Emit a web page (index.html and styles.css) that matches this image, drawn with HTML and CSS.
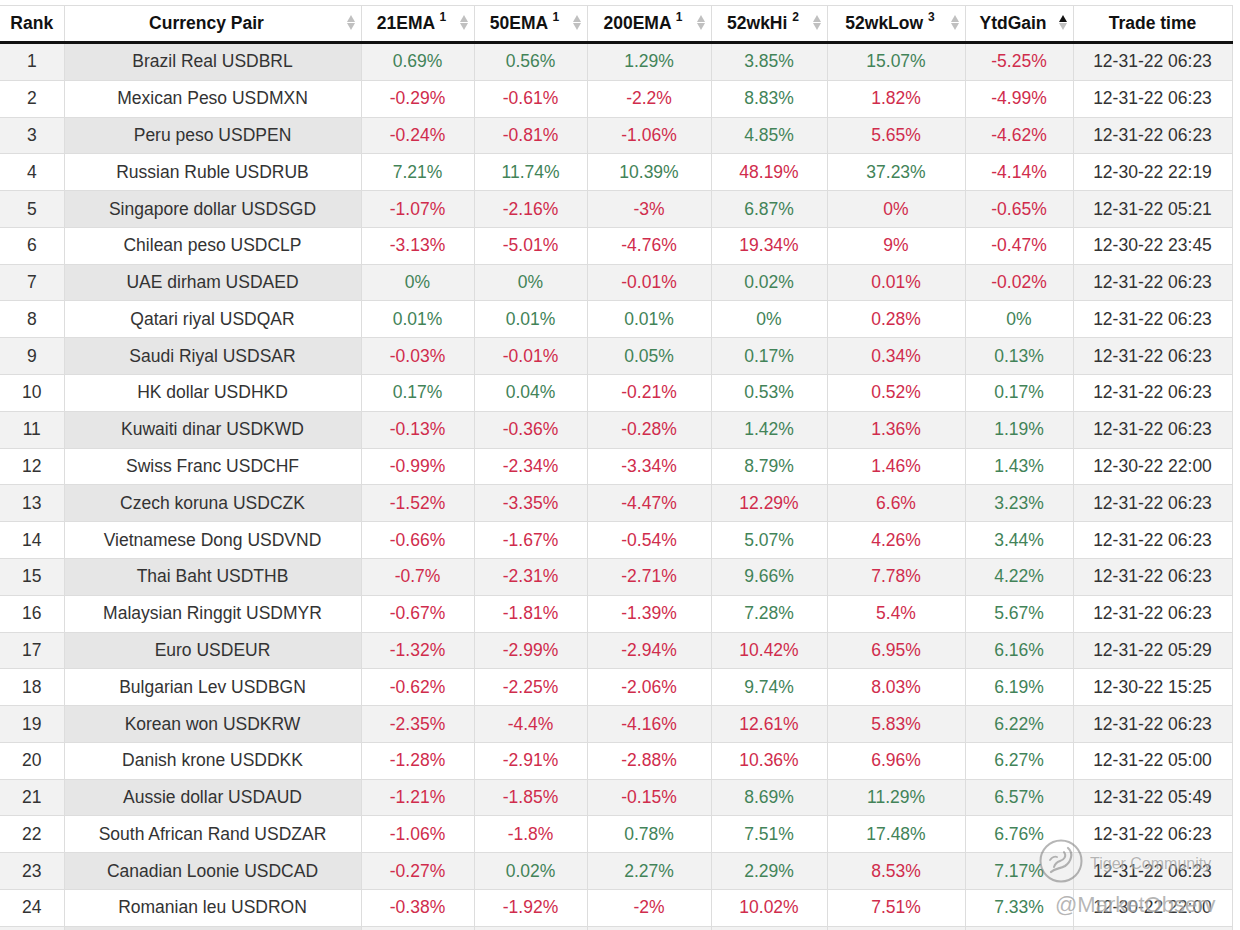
FILE: index.html
```html
<!DOCTYPE html>
<html lang="en">
<head>
<meta charset="utf-8">
<title>Currency Pairs</title>
<link rel="stylesheet" href="styles.css">
</head>
<body>
<div class="wrap">
<table class="grid">
<colgroup>
<col class="c-rank"><col class="c-pair"><col class="c-21"><col class="c-50"><col class="c-200"><col class="c-hi"><col class="c-low"><col class="c-ytd"><col class="c-time">
</colgroup>
<thead>
<tr>
<th>Rank</th>
<th class="sort">Currency Pair</th>
<th class="sort">21EMA <sup>1</sup></th>
<th class="sort">50EMA <sup>1</sup></th>
<th class="sort">200EMA <sup>1</sup></th>
<th class="sort">52wkHi <sup>2</sup></th>
<th class="sort">52wkLow <sup>3</sup></th>
<th class="sort asc">YtdGain</th>
<th>Trade time</th>
</tr>
</thead>
<tbody>
<tr><td>1</td><td class="pair">Brazil Real USDBRL</td><td class="g">0.69%</td><td class="g">0.56%</td><td class="g">1.29%</td><td class="g">3.85%</td><td class="g">15.07%</td><td class="r">-5.25%</td><td>12-31-22 06:23</td></tr>
<tr><td>2</td><td class="pair">Mexican Peso USDMXN</td><td class="r">-0.29%</td><td class="r">-0.61%</td><td class="r">-2.2%</td><td class="g">8.83%</td><td class="r">1.82%</td><td class="r">-4.99%</td><td>12-31-22 06:23</td></tr>
<tr><td>3</td><td class="pair">Peru peso USDPEN</td><td class="r">-0.24%</td><td class="r">-0.81%</td><td class="r">-1.06%</td><td class="g">4.85%</td><td class="r">5.65%</td><td class="r">-4.62%</td><td>12-31-22 06:23</td></tr>
<tr><td>4</td><td class="pair">Russian Ruble USDRUB</td><td class="g">7.21%</td><td class="g">11.74%</td><td class="g">10.39%</td><td class="r">48.19%</td><td class="g">37.23%</td><td class="r">-4.14%</td><td>12-30-22 22:19</td></tr>
<tr><td>5</td><td class="pair">Singapore dollar USDSGD</td><td class="r">-1.07%</td><td class="r">-2.16%</td><td class="r">-3%</td><td class="g">6.87%</td><td class="r">0%</td><td class="r">-0.65%</td><td>12-31-22 05:21</td></tr>
<tr><td>6</td><td class="pair">Chilean peso USDCLP</td><td class="r">-3.13%</td><td class="r">-5.01%</td><td class="r">-4.76%</td><td class="r">19.34%</td><td class="r">9%</td><td class="r">-0.47%</td><td>12-30-22 23:45</td></tr>
<tr><td>7</td><td class="pair">UAE dirham USDAED</td><td class="g">0%</td><td class="g">0%</td><td class="r">-0.01%</td><td class="g">0.02%</td><td class="r">0.01%</td><td class="r">-0.02%</td><td>12-31-22 06:23</td></tr>
<tr><td>8</td><td class="pair">Qatari riyal USDQAR</td><td class="g">0.01%</td><td class="g">0.01%</td><td class="g">0.01%</td><td class="g">0%</td><td class="r">0.28%</td><td class="g">0%</td><td>12-31-22 06:23</td></tr>
<tr><td>9</td><td class="pair">Saudi Riyal USDSAR</td><td class="r">-0.03%</td><td class="r">-0.01%</td><td class="g">0.05%</td><td class="g">0.17%</td><td class="r">0.34%</td><td class="g">0.13%</td><td>12-31-22 06:23</td></tr>
<tr><td>10</td><td class="pair">HK dollar USDHKD</td><td class="g">0.17%</td><td class="g">0.04%</td><td class="r">-0.21%</td><td class="g">0.53%</td><td class="r">0.52%</td><td class="g">0.17%</td><td>12-31-22 06:23</td></tr>
<tr><td>11</td><td class="pair">Kuwaiti dinar USDKWD</td><td class="r">-0.13%</td><td class="r">-0.36%</td><td class="r">-0.28%</td><td class="g">1.42%</td><td class="r">1.36%</td><td class="g">1.19%</td><td>12-31-22 06:23</td></tr>
<tr><td>12</td><td class="pair">Swiss Franc USDCHF</td><td class="r">-0.99%</td><td class="r">-2.34%</td><td class="r">-3.34%</td><td class="g">8.79%</td><td class="r">1.46%</td><td class="g">1.43%</td><td>12-30-22 22:00</td></tr>
<tr><td>13</td><td class="pair">Czech koruna USDCZK</td><td class="r">-1.52%</td><td class="r">-3.35%</td><td class="r">-4.47%</td><td class="r">12.29%</td><td class="r">6.6%</td><td class="g">3.23%</td><td>12-31-22 06:23</td></tr>
<tr><td>14</td><td class="pair">Vietnamese Dong USDVND</td><td class="r">-0.66%</td><td class="r">-1.67%</td><td class="r">-0.54%</td><td class="g">5.07%</td><td class="r">4.26%</td><td class="g">3.44%</td><td>12-31-22 06:23</td></tr>
<tr><td>15</td><td class="pair">Thai Baht USDTHB</td><td class="r">-0.7%</td><td class="r">-2.31%</td><td class="r">-2.71%</td><td class="g">9.66%</td><td class="r">7.78%</td><td class="g">4.22%</td><td>12-31-22 06:23</td></tr>
<tr><td>16</td><td class="pair">Malaysian Ringgit USDMYR</td><td class="r">-0.67%</td><td class="r">-1.81%</td><td class="r">-1.39%</td><td class="g">7.28%</td><td class="r">5.4%</td><td class="g">5.67%</td><td>12-31-22 06:23</td></tr>
<tr><td>17</td><td class="pair">Euro USDEUR</td><td class="r">-1.32%</td><td class="r">-2.99%</td><td class="r">-2.94%</td><td class="r">10.42%</td><td class="r">6.95%</td><td class="g">6.16%</td><td>12-31-22 05:29</td></tr>
<tr><td>18</td><td class="pair">Bulgarian Lev USDBGN</td><td class="r">-0.62%</td><td class="r">-2.25%</td><td class="r">-2.06%</td><td class="g">9.74%</td><td class="r">8.03%</td><td class="g">6.19%</td><td>12-30-22 15:25</td></tr>
<tr><td>19</td><td class="pair">Korean won USDKRW</td><td class="r">-2.35%</td><td class="r">-4.4%</td><td class="r">-4.16%</td><td class="r">12.61%</td><td class="r">5.83%</td><td class="g">6.22%</td><td>12-31-22 06:23</td></tr>
<tr><td>20</td><td class="pair">Danish krone USDDKK</td><td class="r">-1.28%</td><td class="r">-2.91%</td><td class="r">-2.88%</td><td class="r">10.36%</td><td class="r">6.96%</td><td class="g">6.27%</td><td>12-31-22 05:00</td></tr>
<tr><td>21</td><td class="pair">Aussie dollar USDAUD</td><td class="r">-1.21%</td><td class="r">-1.85%</td><td class="r">-0.15%</td><td class="g">8.69%</td><td class="g">11.29%</td><td class="g">6.57%</td><td>12-31-22 05:49</td></tr>
<tr><td>22</td><td class="pair">South African Rand USDZAR</td><td class="r">-1.06%</td><td class="r">-1.8%</td><td class="g">0.78%</td><td class="g">7.51%</td><td class="g">17.48%</td><td class="g">6.76%</td><td>12-31-22 06:23</td></tr>
<tr><td>23</td><td class="pair">Canadian Loonie USDCAD</td><td class="r">-0.27%</td><td class="g">0.02%</td><td class="g">2.27%</td><td class="g">2.29%</td><td class="r">8.53%</td><td class="g">7.17%</td><td>12-31-22 06:23</td></tr>
<tr><td>24</td><td class="pair">Romanian leu USDRON</td><td class="r">-0.38%</td><td class="r">-1.92%</td><td class="r">-2%</td><td class="r">10.02%</td><td class="r">7.51%</td><td class="g">7.33%</td><td>12-30-22 22:00</td></tr>
<tr><td>&nbsp;</td><td class="pair">&nbsp;</td><td>&nbsp;</td><td>&nbsp;</td><td>&nbsp;</td><td>&nbsp;</td><td>&nbsp;</td><td>&nbsp;</td><td>&nbsp;</td></tr>
</tbody>
</table>

<div class="watermark">
<div class="wm-top">
<svg class="wm-logo" width="46" height="46" viewBox="0 0 46 46" aria-hidden="true">
<circle cx="23" cy="23" r="20.5" fill="none" stroke="currentColor" stroke-width="2"/>
<path d="M30 10 C36 15 33 24 27 28 C22 31 17 30 13 34" fill="none" stroke="currentColor" stroke-width="2.2" stroke-linecap="round"/>
<path d="M26 14 C29 18 26 22 22 23 C19 24 17 26 16 29" fill="none" stroke="currentColor" stroke-width="2" stroke-linecap="round"/>
<path d="M12 22 C14 19 17 18 19 19" fill="none" stroke="currentColor" stroke-width="1.8" stroke-linecap="round"/>
</svg>
<span class="wm-name">Tiger Community</span>
</div>
<div class="wm-handle">@MarketObserv</div>
</div>
</div>
</body>
</html>
```

FILE: styles.css
```css
html, body {
  margin: 0;
  padding: 0;
  background: #ffffff;
}

body {
  font-family: "Liberation Sans", Arial, sans-serif;
  color: #333333;
}

.wrap {
  position: relative;
  padding-top: 5px;
}

.grid {
  border-collapse: collapse;
  table-layout: fixed;
  width: 1232px;
  font-size: 17.5px;
}

.c-rank { width: 64px; }
.c-pair { width: 297px; }
.c-21 { width: 113px; }
.c-50 { width: 113px; }
.c-200 { width: 124px; }
.c-hi { width: 116px; }
.c-low { width: 138px; }
.c-ytd { width: 108px; }
.c-time { width: 159px; }

.grid th {
  position: relative;
  border-top: 1px solid #dddddd;
  border-right: 1px solid #dddddd;
  border-bottom: 3px solid #111111;
  padding: 6px 10px 6px 10px;
  line-height: 23px;
  font-weight: bold;
  color: #111111;
  text-align: center;
  white-space: nowrap;
  background: #ffffff;
}

.grid th.sort {
  padding-right: 22px;
}

.grid th.sort::before,
.grid th.sort::after {
  content: "";
  position: absolute;
  right: 6px;
  width: 0;
  height: 0;
  border-left: 4.5px solid transparent;
  border-right: 4.5px solid transparent;
}

.grid th.sort::before {
  top: 9px;
  border-bottom: 7px solid #c0c0c0;
}

.grid th.sort::after {
  top: 17px;
  border-top: 7px solid #c0c0c0;
}

.grid th.asc::before {
  border-bottom-color: #111111;
}

.grid sup {
  font-size: 12px;
  line-height: 0;
  vertical-align: 8px;
}

.grid td {
  border-top: 1px solid #dddddd;
  border-right: 1px solid #dddddd;
  padding: 6.45px 10px;
  line-height: 22.9px;
  text-align: center;
  color: #333333;
  white-space: nowrap;
  background: #ffffff;
}

.grid tbody tr:first-child td {
  border-top: none;
}

.grid tbody tr:nth-child(odd) td {
  background: #f2f2f2;
}

.grid tbody tr:nth-child(odd) td.pair {
  background: #e6e6e6;
}

.grid td.g {
  color: #428358;
}

.grid td.r {
  color: #d02c4c;
}

.watermark {
  position: absolute;
  left: 1038px;
  top: 838px;
  color: rgba(110, 110, 110, 0.5);
  text-shadow: 0 0 2px rgba(255, 255, 255, 0.9);
  pointer-events: none;
}

.wm-top {
  display: flex;
  align-items: center;
  gap: 6px;
}

.wm-logo {
  display: block;
}

.wm-name {
  font-family: "Liberation Sans", Arial, sans-serif;
  font-size: 16px;
  margin-top: 6px;
}

.wm-handle {
  font-family: "Liberation Sans", Arial, sans-serif;
  font-size: 22px;
  margin-top: 8px;
  margin-left: 17px;
}
```
